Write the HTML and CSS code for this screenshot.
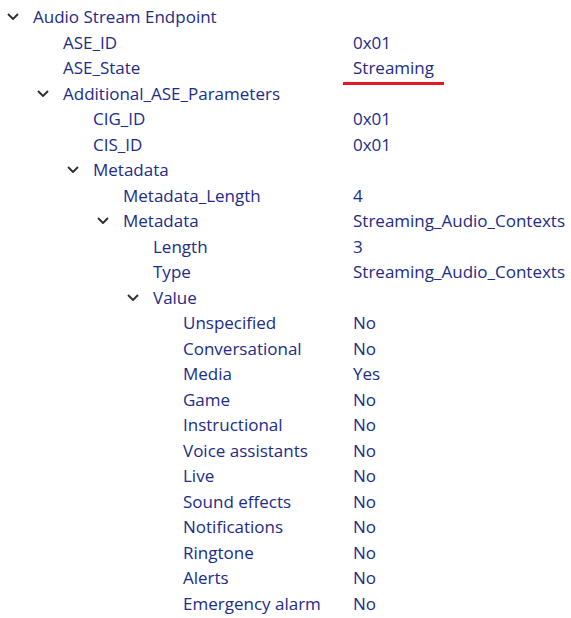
FILE: index.html
```html
<!DOCTYPE html>
<html lang="en">
<head>
  <meta charset="UTF-8" />
  <meta name="viewport" content="width=device-width, initial-scale=1.0" />
  <title>Audio Stream Endpoint</title>
  <link rel="stylesheet" href="styles.css">
</head>
<body>

  <div class="tree">
    <div class="row lvl-0 open"><span class="name"><span class="twist"><svg viewBox="0 0 12 7"><path d="M1 1l5 5 5-5"/></svg></span>Audio Stream Endpoint</span><span class="value"></span></div>
    <div class="row lvl-1"><span class="name"><span class="twist"></span>ASE_ID</span><span class="value">0x01</span></div>
    <div class="row lvl-1"><span class="name"><span class="twist"></span>ASE_State</span><span class="value marked">Streaming</span></div>
    <div class="row lvl-1 open"><span class="name"><span class="twist"><svg viewBox="0 0 12 7"><path d="M1 1l5 5 5-5"/></svg></span>Additional_ASE_Parameters</span><span class="value"></span></div>
    <div class="row lvl-2"><span class="name"><span class="twist"></span>CIG_ID</span><span class="value">0x01</span></div>
    <div class="row lvl-2"><span class="name"><span class="twist"></span>CIS_ID</span><span class="value">0x01</span></div>
    <div class="row lvl-2 open"><span class="name"><span class="twist"><svg viewBox="0 0 12 7"><path d="M1 1l5 5 5-5"/></svg></span>Metadata</span><span class="value"></span></div>
    <div class="row lvl-3"><span class="name"><span class="twist"></span>Metadata_Length</span><span class="value">4</span></div>
    <div class="row lvl-3 open"><span class="name"><span class="twist"><svg viewBox="0 0 12 7"><path d="M1 1l5 5 5-5"/></svg></span>Metadata</span><span class="value">Streaming_Audio_Contexts</span></div>
    <div class="row lvl-4"><span class="name"><span class="twist"></span>Length</span><span class="value">3</span></div>
    <div class="row lvl-4"><span class="name"><span class="twist"></span>Type</span><span class="value">Streaming_Audio_Contexts</span></div>
    <div class="row lvl-4 open"><span class="name"><span class="twist"><svg viewBox="0 0 12 7"><path d="M1 1l5 5 5-5"/></svg></span>Value</span><span class="value"></span></div>
    <div class="row lvl-5"><span class="name"><span class="twist"></span>Unspecified</span><span class="value">No</span></div>
    <div class="row lvl-5"><span class="name"><span class="twist"></span>Conversational</span><span class="value">No</span></div>
    <div class="row lvl-5"><span class="name"><span class="twist"></span>Media</span><span class="value">Yes</span></div>
    <div class="row lvl-5"><span class="name"><span class="twist"></span>Game</span><span class="value">No</span></div>
    <div class="row lvl-5"><span class="name"><span class="twist"></span>Instructional</span><span class="value">No</span></div>
    <div class="row lvl-5"><span class="name"><span class="twist"></span>Voice assistants</span><span class="value">No</span></div>
    <div class="row lvl-5"><span class="name"><span class="twist"></span>Live</span><span class="value">No</span></div>
    <div class="row lvl-5"><span class="name"><span class="twist"></span>Sound effects</span><span class="value">No</span></div>
    <div class="row lvl-5"><span class="name"><span class="twist"></span>Notifications</span><span class="value">No</span></div>
    <div class="row lvl-5"><span class="name"><span class="twist"></span>Ringtone</span><span class="value">No</span></div>
    <div class="row lvl-5"><span class="name"><span class="twist"></span>Alerts</span><span class="value">No</span></div>
    <div class="row lvl-5"><span class="name"><span class="twist"></span>Emergency alarm</span><span class="value">No</span></div>
  </div>

</body>
</html>
```

FILE: styles.css
```css
body {
  margin: 0;
  background-color: #ffffff;
  font-family: "Open Sans", "Noto Sans", "Liberation Sans", sans-serif;
  font-size: 17px;
  line-height: 23px;
  color: #212b88;
}

.tree {
  padding-top: 4px;
}

.row {
  display: flex;
  height: 25.5px;
  align-items: center;
  white-space: nowrap;
}

.name {
  display: flex;
  align-items: center;
  width: 353px;
  box-sizing: border-box;
}

.twist {
  display: inline-flex;
  justify-content: center;
  align-items: center;
  width: 33px;
  flex: none;
}

.twist svg {
  width: 12px;
  height: 7px;
  margin-left: -7px;
  fill: none;
  stroke: #2e2e2e;
  stroke-width: 1.9;
}

.lvl-1 .name { padding-left: 30px; }
.lvl-2 .name { padding-left: 60px; }
.lvl-3 .name { padding-left: 90px; }
.lvl-4 .name { padding-left: 120px; }
.lvl-5 .name { padding-left: 150px; }

.value.marked {
  position: relative;
}

.value.marked::after {
  content: "";
  position: absolute;
  left: -10px;
  width: 101px;
  top: 26px;
  height: 3px;
  background-color: #e8161e;
}
```
